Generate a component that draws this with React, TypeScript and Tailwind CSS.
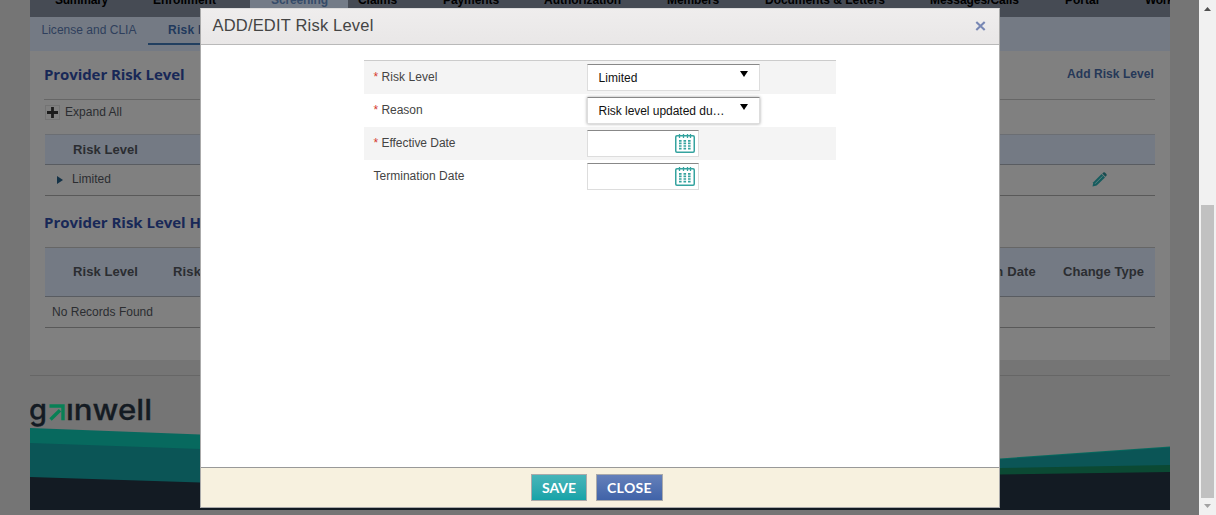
import React from "react";

const ui = "font-['Liberation_Sans',Arial,sans-serif]";

const navItems = [
  { label: "Summary", box: "w-[98px] pl-[25px]", len: 53 },
  { label: "Enrollment", box: "w-[122px] pl-[25px]", len: 63 },
  { label: "Screening", box: "w-[98px] pl-[21px] bg-[#747c88] text-[#354b69]", len: 57 },
  { label: "Claims", box: "w-[85px] pl-[10px]", len: 39 },
  { label: "Payments", box: "w-[101px] pl-[10px]", len: 56 },
  { label: "Authorization", box: "w-[123px] pl-[10px]", len: 77 },
  { label: "Members", box: "w-[98px] pl-[10px]", len: 52 },
  { label: "Documents & Letters", box: "w-[165px] pl-[10px]", len: 120 },
  { label: "Messages/Calls", box: "w-[135px] pl-[10px]", len: 89 },
  { label: "Portal", box: "w-[80px] pl-[10px]", len: 34 },
  { label: "Workflow", box: "w-[80px] pl-[10px]", len: 51 },
];

function Txt({
  children,
  w,
  size = 12,
  bold = false,
  family = "'Liberation Sans', Arial, sans-serif",
}: {
  children: string;
  w: number;
  size?: number;
  bold?: boolean;
  family?: string;
}) {
  const ref = React.useRef<HTMLSpanElement>(null);
  const [spacing, setSpacing] = React.useState(0);
  React.useLayoutEffect(() => {
    const el = ref.current;
    if (!el) return;
    const natural = el.getBoundingClientRect().width;
    setSpacing((w - natural) / children.length);
  }, []);
  return (
    <span
      ref={ref}
      className={`block w-max whitespace-pre ${bold ? "font-bold" : ""}`}
      style={{ fontSize: size, fontFamily: family, letterSpacing: spacing }}
    >
      {children}
    </span>
  );
}

const heading = "'Open Sans', 'Noto Sans', sans-serif";
const buttonFace = "Lato, 'Open Sans', sans-serif";

function CalendarIcon() {
  return (
    <svg width="20" height="20" viewBox="0 0 20 20" fill="none" stroke="#35a39f">
      <rect x="0.75" y="1.75" width="18.5" height="16.5" rx="1.2" strokeWidth="1.5" />
      <path d="M4.5 0v4M8.5 0v4M12.5 0v4M15.5 0v4" strokeWidth="1.3" />
      <path
        d="M4 6.8h2.6M8.5 6.8h2.6M13 6.8h2.6M4 9.4h2.6M8.5 9.4h2.6M13 9.4h2.6M4 12h2.6M8.5 12h2.6M13 12h2.6M4 14.6h2.6M8.5 14.6h2.6M13 14.6h2.6"
        strokeWidth="1.7"
      />
    </svg>
  );
}

function Label({ text, w, required }: { text: string; w: number; required?: boolean }) {
  return (
    <div className="flex h-[33px] w-[223px] items-start pl-[9.5px] pt-[8px] leading-4 text-[#444]">
      {required && <span className="w-2 text-[12px] text-[#d43a2f]">*</span>}
      <Txt w={w}>{text}</Txt>
    </div>
  );
}

function SelectBox({ text, w, focus }: { text: string; w: number; focus?: boolean }) {
  return (
    <div
      className={`mt-[3px] flex h-[27px] w-[173px] justify-between border border-[#ddd] border-t-[#888] bg-white pl-[10.5px] pr-[11px] text-[#111] ${
        focus ? "shadow-[0_0_3px_rgba(0,0,0,0.35)]" : ""
      }`}
    >
      <div className="pt-[5px] leading-4">
        <Txt w={w}>{text}</Txt>
      </div>
      <svg className="mt-[6px]" width="8" height="6" viewBox="0 0 8 6">
        <path d="M0 0h8L4 6z" fill="#000" />
      </svg>
    </div>
  );
}

function DateBox() {
  return (
    <div className="mt-[3px] flex h-[27px] w-[112px] justify-end border border-[#ddd] border-t-[#888] bg-white pr-[3px] pt-[3px]">
      <CalendarIcon />
    </div>
  );
}

function Background() {
  return (
    <div className="h-[515px] w-[1199px] overflow-hidden bg-[#757575] pl-[30px] text-[#2b2d31]">
      <div className="w-[1140px]">
        <nav className="flex h-[17px] overflow-hidden bg-[#464b54] text-black">
          {navItems.map((n) => (
            <div key={n.label} className={`h-[17px] shrink-0 ${n.box}`}>
              <div className="-mt-[8px] leading-4">
                <Txt w={n.len} bold>
                  {n.label}
                </Txt>
              </div>
            </div>
          ))}
        </nav>
        <div className="flex h-[34px] bg-[#747a84] text-[#2f3f5c]">
          <div className="w-[118px] pl-[11.5px] pt-[5px] leading-4">
            <Txt w={95}>License and CLIA</Txt>
          </div>
          <div className="h-[28px] w-[52px] overflow-hidden border-b-2 border-[#213f60] pl-[20px] pt-[5px] leading-4 text-[#21395c]">
            <Txt w={62} bold>
              Risk Level
            </Txt>
          </div>
        </div>
        <main className="h-[309px] bg-[#808080] px-[15px]">
          <div className="-ml-px flex h-[49px] items-start justify-between border-b border-[#666] pr-px">
            <h2 className="pt-[13px] leading-5 text-[#182857]">
              <Txt w={140.5} size={15} bold family={heading}>
                Provider Risk Level
              </Txt>
            </h2>
            <div className="pt-[15px] leading-4 text-[#263858]">
              <Txt w={87} bold>
                Add Risk Level
              </Txt>
            </div>
          </div>
          <div className="flex h-[34px] items-start pt-[4px]">
            <div className="mt-px flex h-[15px] w-[15px] items-center justify-center border border-[#737373]">
              <svg width="11" height="11" viewBox="0 0 11 11">
                <path d="M5.5 0v11M0 5.5h11" stroke="#1b1b1b" strokeWidth="2.8" />
              </svg>
            </div>
            <div className="ml-[5px] leading-4">
              <Txt w={57}>Expand All</Txt>
            </div>
          </div>
          <div className="flex h-[31px] items-center border-y border-b-[#595c61] border-t-[#6b6e73] bg-[#747a84] pl-[28px]">
            <Txt w={65} size={13} bold>
              Risk Level
            </Txt>
          </div>
          <div className="flex h-[31px] items-start border-b border-[#595959] pt-[6px]">
            <svg className="ml-[12px] mt-[5px]" width="6" height="8" viewBox="0 0 6 8">
              <path d="M0 0l6 4-6 4z" fill="#143247" />
            </svg>
            <div className="ml-[9px] leading-4">
              <Txt w={39}>Limited</Txt>
            </div>
            <svg className="ml-auto mr-[48px] mt-px" width="15" height="15" viewBox="0 0 15 15">
              <path d="M0.5 14.5l.8-4.2L9.6 2l3.4 3.4L4.7 13.6z" fill="#175c5e" />
              <path d="M3 11.8L10.5 4.3" stroke="#5f8585" strokeWidth="0.9" />
              <path d="M10.3 1.5l1-1q.8-.6 1.6.1l1.5 1.5q.6.8 0 1.6l-1 1z" fill="#174c50" />
            </svg>
          </div>
          <h2 className="-ml-px h-[51px] pt-[16px] leading-5 text-[#182857]">
            <Txt w={200} size={15} bold family={heading}>
              Provider Risk Level History
            </Txt>
          </h2>
          <div className="flex h-[50px] items-center border-y border-b-[#595c61] border-t-[#666] bg-[#747a84] pl-[28px]">
            <div className="w-[100px]">
              <Txt w={65} size={13} bold>
                Risk Level
              </Txt>
            </div>
            <Txt w={80} size={13} bold>
              Risk Reason
            </Txt>
            <div className="ml-auto mr-[27px]">
              <Txt w={108} size={13} bold>
                Termination Date
              </Txt>
            </div>
            <div className="mr-[11px]">
              <Txt w={81} size={13} bold>
                Change Type
              </Txt>
            </div>
          </div>
          <div className="h-[31px] border-b border-[#595959] pl-[7px] pt-[7px] leading-4">
            <Txt w={101}>No Records Found</Txt>
          </div>
        </main>
        <footer className="mt-[15px] border-t border-[#666]">
          <svg className="block" width="1140" height="134" viewBox="0 0 1140 134">
            <g fill="#141b23" fontFamily="Inter, sans-serif" fontWeight="500" fontSize="29">
              <text x="-1" y="43.5" textLength="18" lengthAdjust="spacingAndGlyphs" stroke="#141b23" strokeWidth="0.3">g</text>
              <text x="36" y="43.5" textLength="86" lengthAdjust="spacingAndGlyphs" stroke="#141b23" strokeWidth="0.3">ınwell</text>
            </g>
            <path d="M19.5 30h13.5v14.3M20.5 43.5L30 34.3" fill="none" stroke="#078055" strokeWidth="3.4" />
            <path d="M0 52L170 58.5L500 76L800 85L970 82.5L1140 70.5V134H0z" fill="#07695e" />
            <path d="M0 67L170 73L500 86L800 91L970 83.5L1140 71.5V134H0z" fill="#0b5556" />
            <path d="M700 98L970 92L1140 89V134H700z" fill="#0b4933" />
            <path d="M0 101L170 106.5L500 115L970 98.5L1140 96V134H0z" fill="#131b23" />
          </svg>
        </footer>
      </div>
    </div>
  );
}

function Modal() {
  return (
    <div className="absolute left-[200px] top-[8px] flex h-[500px] w-[800px] flex-col border border-[#aaa] border-t-[#ddd] bg-white">
      <header className="flex h-[36px] shrink-0 items-start justify-between border-b border-[#b9b9b9] bg-gradient-to-b from-[#efeded] to-[#e9e7e7] pl-[11.5px] pr-[13px] text-[#444]">
        <h1 className="pt-[6px] leading-5">
          <Txt w={161} size={16.5}>
            ADD/EDIT Risk Level
          </Txt>
        </h1>
        <svg className="mt-[12px]" width="11" height="10" viewBox="0 0 11 10">
          <path d="M1.3 1l8.4 8M9.7 1l-8.4 8" stroke="#7887b4" strokeWidth="2.1" />
        </svg>
      </header>
      <section className="ml-[163px] mt-[15px] w-[472px] border-t border-[#ccc]">
        <div className="flex h-[33px] bg-[#f4f4f4]">
          <Label text="Risk Level" w={56} required />
          <SelectBox text="Limited" w={39} />
        </div>
        <div className="flex h-[33px]">
          <Label text="Reason" w={41} required />
          <SelectBox text="Risk level updated du…" w={126} focus />
        </div>
        <div className="flex h-[33px] bg-[#f4f4f4]">
          <Label text="Effective Date" w={74} required />
          <DateBox />
        </div>
        <div className="flex h-[33px]">
          <Label text="Termination Date" w={91} />
          <DateBox />
        </div>
      </section>
      <footer className="mt-auto flex h-[40px] justify-center gap-[9px] border-t border-[#999] bg-[#f7f1df] pt-[6px] text-white">
        <button className="-ml-[7px] flex h-[27px] w-[56px] items-center justify-center border border-[#aaa] bg-gradient-to-b from-[#46b5b9] to-[#14a3a8] pb-px pl-px">
          <Txt w={34} size={14} bold family={buttonFace}>
            SAVE
          </Txt>
        </button>
        <button className="flex h-[27px] w-[67px] items-center justify-center border border-[#aaa] bg-gradient-to-b from-[#6580ba] to-[#4063a8] pb-px pl-px">
          <Txt w={45} size={14} bold family={buttonFace}>
            CLOSE
          </Txt>
        </button>
      </footer>
    </div>
  );
}

function Scrollbar() {
  return (
    <div className="flex h-[515px] w-[17px] flex-col items-center bg-[#f1f1f1]">
      <svg className="mt-[7px]" width="7" height="4" viewBox="0 0 7 4">
        <path d="M0 4L3.5 0 7 4z" fill="#505050" />
      </svg>
      <div className="mt-[194px] h-[293px] w-[13px] bg-[#c1c1c1]" />
      <svg className="mt-[6px]" width="7" height="4" viewBox="0 0 7 4">
        <path d="M0 0h7L3.5 4z" fill="#a3a3a3" />
      </svg>
    </div>
  );
}

export default function App() {
  return (
    <div className={`relative flex h-[515px] w-[1216px] overflow-hidden ${ui}`}>
      <Background />
      <Scrollbar />
      <Modal />
    </div>
  );
}
